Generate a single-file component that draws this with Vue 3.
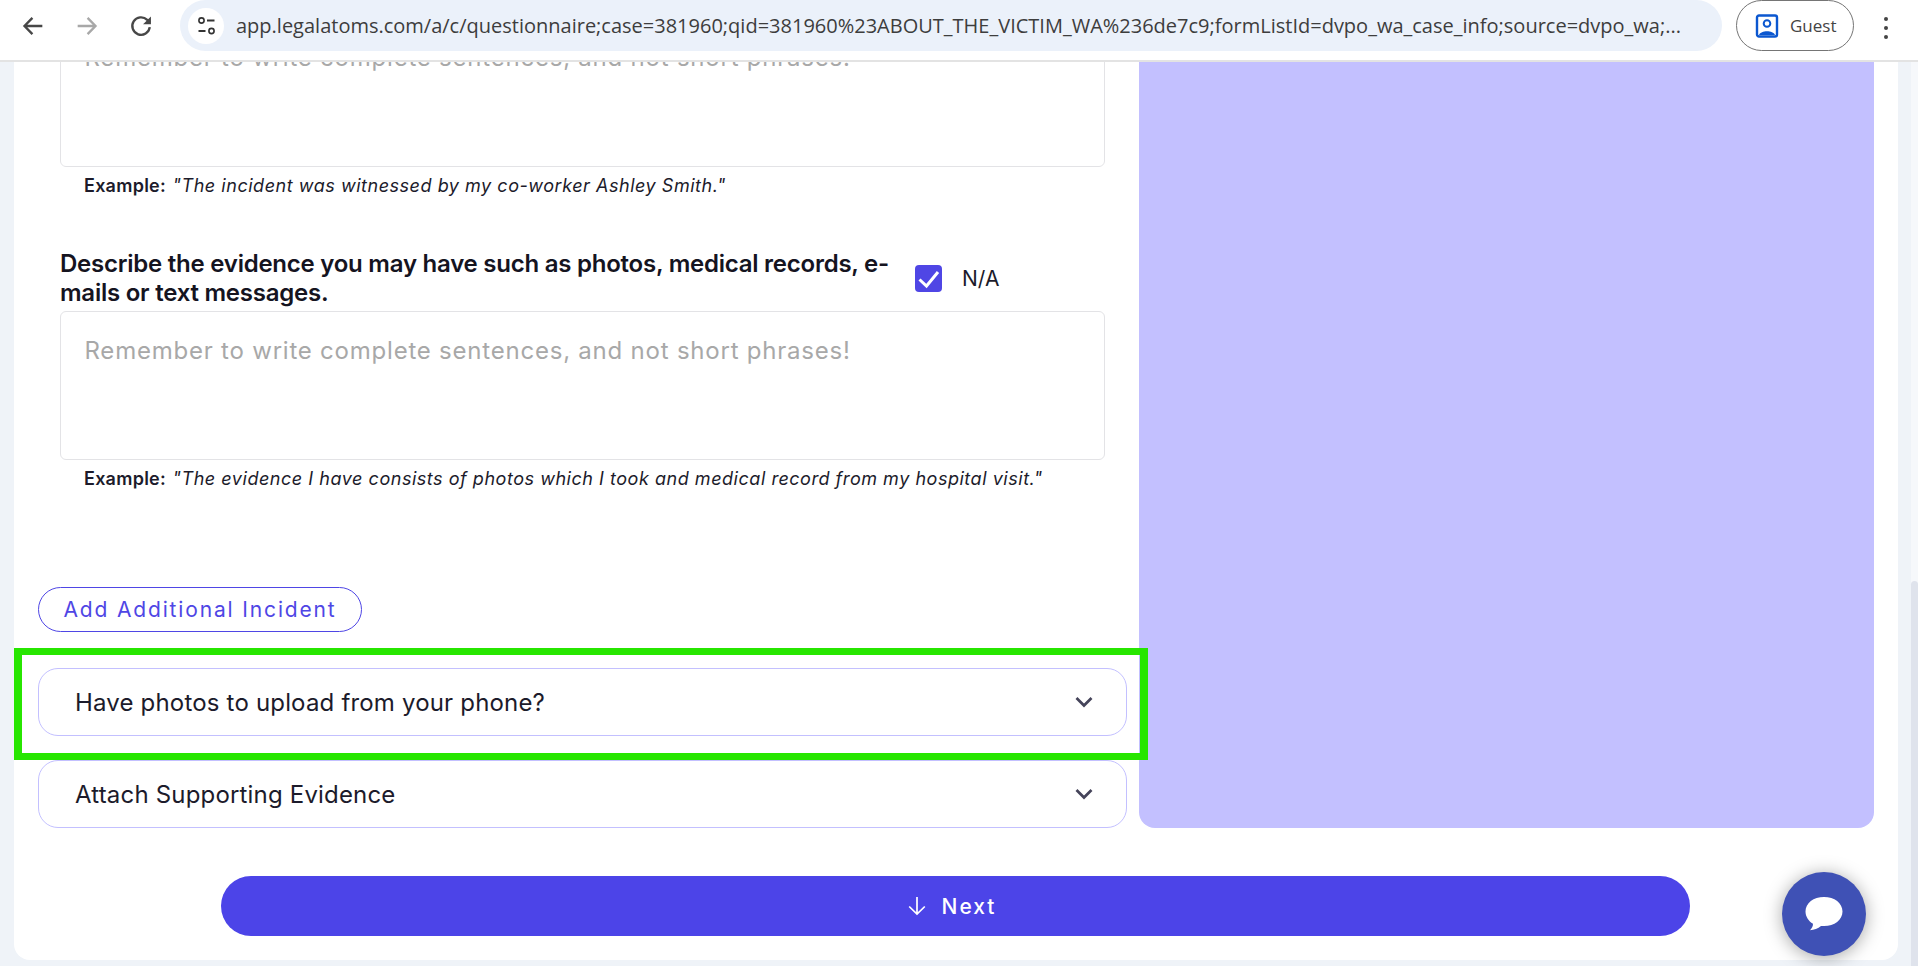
<script setup>
const url = 'app.legalatoms.com/a/c/questionnaire;case=381960;qid=381960%23ABOUT_THE_VICTIM_WA%236de7c9;formListId=dvpo_wa_case_info;source=dvpo_wa;...'
const accordions = ['Have photos to upload from your phone?', 'Attach Supporting Evidence']
const placeholder = 'Remember to write complete sentences, and not short phrases!'
</script>

<template>
  <div class="window">
    <header class="chrome">
      <div class="nav">
        <svg class="nav-icon" viewBox="0 0 24 24"><path d="M20 12H5M11.5 5 4.7 12l6.8 7" fill="none" stroke="#474747" stroke-width="2"/></svg>
        <svg class="nav-icon" viewBox="0 0 24 24"><path d="M4 12h15M12.5 5l6.8 7-6.8 7" fill="none" stroke="#a8a8a8" stroke-width="2"/></svg>
        <svg class="nav-icon" viewBox="0 0 24 24"><path d="M19.5 13a7.5 7.5 0 1 1-2.2-6.3L19.5 9" fill="none" stroke="#474747" stroke-width="2"/><path d="M20.5 3.8v6.7h-6.7z" fill="#474747"/></svg>
      </div>
      <div class="omnibox">
        <span class="site-btn">
          <svg viewBox="0 0 20 20" width="20" height="20"><circle cx="5.5" cy="4.5" r="2.6" fill="none" stroke="#333" stroke-width="1.6"/><path d="M11 4.500h7.500M2.500 15h7" stroke="#333" stroke-width="1.8"/><circle cx="15.500" cy="15" r="2.6" fill="none" stroke="#333" stroke-width="1.6"/></svg>
        </span>
        <span class="url">{{ url }}</span>
      </div>
      <div class="guest">
        <svg viewBox="0 0 24 24" width="24" height="24"><rect x="2" y="1.500" width="20" height="21" rx="2" fill="none" stroke="#0b57d0" stroke-width="2.400"/><circle cx="12" cy="9.500" r="3.300" fill="none" stroke="#0b57d0" stroke-width="2"/><path d="M4 21c2-5 14-5 16 0z" fill="#0b57d0"/></svg>
        <span>Guest</span>
      </div>
      <div class="dots"><i></i><i></i><i></i></div>
    </header>

    <div class="viewport">
      <main class="page">
        <section class="card">
          <div class="columns">
            <div class="form">
              <div class="field field-clipped">
                <div class="textarea"><span class="ph">{{ placeholder }}</span></div>
                <p class="example"><b>Example:</b> <em>"The incident was witnessed by my co-worker Ashley Smith."</em></p>
              </div>

              <div class="field field-second">
                <div class="label-row">
                  <label class="label">Describe the evidence you may have such as photos, medical records, e-mails or text messages.</label>
                  <div class="na">
                    <span class="check">
                      <svg viewBox="0 0 27 27" width="27" height="27"><path d="M4.500 14.500l7 6.500L23 7" fill="none" stroke="#fff" stroke-width="3"/></svg>
                    </span>
                    <span>N/A</span>
                  </div>
                </div>
                <div class="textarea"><span class="ph">{{ placeholder }}</span></div>
                <p class="example"><b>Example:</b> <em>"The evidence I have consists of photos which I took and medical record from my hospital visit."</em></p>
              </div>

              <button class="add-btn">Add Additional Incident</button>

              <div class="accordions">
                <div v-for="a in accordions" :key="a" class="accordion">
                  <span>{{ a }}</span>
                  <svg viewBox="0 0 18 12" width="18" height="12"><path d="M1.500 2 9 9.500 16.500 2" fill="none" stroke="#45445a" stroke-width="2.700"/></svg>
                </div>
              </div>
            </div>
            <aside class="panel"></aside>
          </div>
          <div class="footer">
            <button class="next">
              <svg viewBox="0 0 18 20" width="18" height="20"><path d="M9 1v17M1.200 10.500 9 18l7.800-7.500" fill="none" stroke="#fff" stroke-width="1.700"/></svg>
              <span>Next</span>
            </button>
          </div>
        </section>
        <div class="highlight"></div>
        <button class="chat" aria-label="Chat">
          <svg viewBox="0 0 38 36" width="38" height="36"><path d="M19 1c10.500 0 18.500 6 18.500 14.500S29.500 30 19 30h-3c-3 2.500-7 4-11 4.300 1.800-1.800 3-3.800 3-6.500C3.500 25 .5 20.500.5 15.500.5 7 8.500 1 19 1z" fill="#fff"/></svg>
        </button>
      </main>
      <div class="scrollbar"><div class="thumb"></div></div>
    </div>
  </div>
</template>

<style>
html, body { margin: 0; padding: 0; background: #eff3f8; overflow: hidden; }
</style>

<style scoped>
.window { width: 1918px; height: 966px; display: flex; flex-direction: column; overflow: hidden; font-family: Inter, "Noto Sans", sans-serif; color: #1c1b2b; }
.chrome { height: 60px; border-bottom: 2px solid #e3e3e3; background: #fff; display: flex; align-items: flex-start; flex: none; position: relative; z-index: 2; }
.nav { display: flex; gap: 26px; padding: 10px 0 0 19px; width: 159px; box-sizing: border-box; }
.nav-icon { width: 28px; height: 32px; flex: none; }
.omnibox { width: 1542px; height: 51px; background: #ebf1fa; border-radius: 26px; display: flex; align-items: center; padding-left: 8px; box-sizing: border-box; flex: none; margin-left: 21px; }
.site-btn { width: 36px; height: 36px; border-radius: 50%; background: #fff; display: flex; align-items: center; justify-content: center; flex: none; }
.url { margin-left: 12px; font-family: "Open Sans", sans-serif; font-size: 20px; color: #3d3d3d; white-space: nowrap; }
.guest { margin-left: 14px; width: 118px; height: 51px; box-sizing: border-box; border: 1.500px solid #757575; border-radius: 26px; display: flex; align-items: center; gap: 11px; padding-left: 18px; font-family: "Open Sans", sans-serif; font-size: 17px; color: #444; flex: none; }
.dots { display: flex; flex-direction: column; gap: 5px; padding: 17px 0 0 30px; }
.dots i { width: 4px; height: 4px; background: #444; border-radius: 50%; display: block; }

.viewport { flex: 1; display: flex; min-height: 0; }
.page { flex: 1; position: relative; padding: 0 13px 6px 14px; min-width: 0; }
.scrollbar { width: 7px; background: #f6f8fb; flex: none; display: flex; flex-direction: column; justify-content: flex-end; }
.thumb { height: 385px; background: #dfe3ec; border-radius: 4px 4px 0 0; }
.card { background: #fff; border-radius: 0 0 16px 16px; height: 898px; overflow: hidden; display: flex; flex-direction: column; }
.columns { display: flex; height: 766px; flex: none; }
.form { width: 1125px; padding: 0 12px 0 24px; box-sizing: border-box; flex: none; }
.panel { width: 735px; background: #c3c0ff; border-radius: 0 0 16px 16px; flex: none; }

.field { padding: 0 22px; }
.field-clipped { margin-top: -44px; }
.field-second { margin-top: 49px; }
.textarea { height: 149px; box-sizing: border-box; border: 1.500px solid #e3e3e6; border-radius: 6px; padding: 24px 23.500px; background: #fff; }
.ph { font-size: 24px; line-height: 30px; color: #a8a8a8; letter-spacing: 0.78px; white-space: nowrap; }
.example { margin: 5px 0 0; padding-left: 24px; font-size: 18px; line-height: 28px; letter-spacing: 0.53px; color: #1c1b2b; white-space: nowrap; }
.example b { font-weight: 600; letter-spacing: 0.25px; margin-right: 1px; }
.label-row { display: flex; align-items: center; margin-bottom: 4px; }
.label { width: 855px; font-size: 24px; line-height: 29px; font-weight: 600; flex: none; letter-spacing: -0.24px; color: #15141f; }
.na { display: flex; align-items: center; gap: 20px; font-size: 21px; }
.check { width: 27px; height: 27px; background: #4f46e5; border-radius: 4px; display: block; }
.check svg { display: block; }

.add-btn { display: block; margin-top: 94px; width: 324px; height: 45px; box-sizing: border-box; border: 1.500px solid #4f46e5; border-radius: 23px; background: #fff; color: #4f46e5; font-family: inherit; font-size: 21px; letter-spacing: 1.85px; text-align: center; padding: 0; }
.accordions { margin-top: 36px; display: flex; flex-direction: column; gap: 24px; }
.accordion { height: 68px; box-sizing: border-box; border: 1.500px solid #c3c0ff; border-radius: 20px; display: flex; align-items: center; justify-content: space-between; padding: 0 33px 0 36px; font-size: 24px; letter-spacing: 0.18px; background: #fff; }

.footer { padding: 48px 0 24px 207px; }
.next { width: 1469px; height: 60px; border: none; border-radius: 30px; background: #4c44e8; color: #fff; font-family: inherit; font-size: 21px; font-weight: 500; letter-spacing: 2px; display: flex; align-items: center; justify-content: center; gap: 16px; padding: 0 7px 0 0; }
.highlight { position: absolute; left: 14px; top: 586px; width: 1134px; height: 112px; box-sizing: border-box; border: 8px solid #27e600; border-top-width: 7px; border-bottom-width: 7px; pointer-events: none; }
.chat { position: absolute; left: 1782px; top: 810px; width: 84px; height: 84px; border-radius: 50%; border: none; padding: 0; background: #3f51b5; box-shadow: 0 2px 18px rgba(0,0,0,.35); display: flex; align-items: center; justify-content: center; }
</style>
